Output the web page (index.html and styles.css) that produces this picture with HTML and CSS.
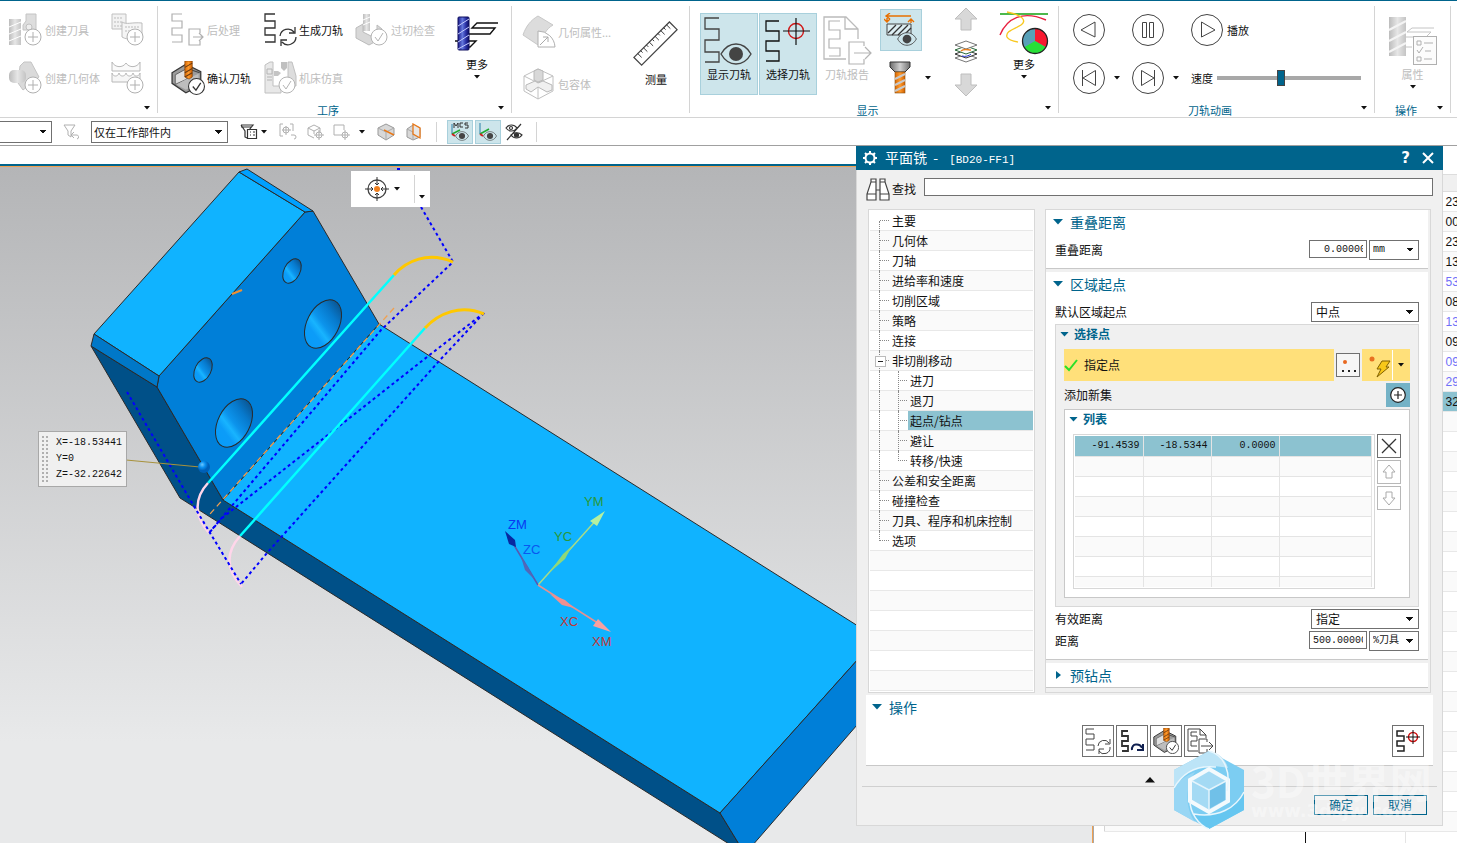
FILE: index.html
```html
<!DOCTYPE html>
<html lang="zh-CN">
<head>
<meta charset="utf-8">
<title>平面铣</title>
<link rel="stylesheet" href="styles.css">
</head>
<body>
<svg class="defs" aria-hidden="true">
  <defs>
    <linearGradient id="gGrey"><stop offset="0" stop-color="#bcbcbc"/><stop offset=".5" stop-color="#e6e6e6"/><stop offset="1" stop-color="#c4c4c4"/></linearGradient>
    <linearGradient id="gBlue"><stop offset="0" stop-color="#1c1c8c"/><stop offset=".4" stop-color="#6478dc"/><stop offset=".7" stop-color="#2c34a8"/><stop offset="1" stop-color="#0c0c60"/></linearGradient>
    <linearGradient id="gOrange"><stop offset="0" stop-color="#d86a08"/><stop offset=".5" stop-color="#ff9a2c"/><stop offset="1" stop-color="#d06000"/></linearGradient>
    <linearGradient id="gSteel"><stop offset="0" stop-color="#6c6c6c"/><stop offset=".5" stop-color="#d0d0d0"/><stop offset="1" stop-color="#707070"/></linearGradient>
    <linearGradient id="gHole" x1=".65" y1="0" x2=".35" y2="1"><stop offset="0" stop-color="#0a5490"/><stop offset=".25" stop-color="#0779cc"/><stop offset=".5" stop-color="#0c94ec"/><stop offset=".62" stop-color="#18b4ff"/><stop offset=".75" stop-color="#0c9cf8"/><stop offset="1" stop-color="#089cf8"/></linearGradient>
    <radialGradient id="gBall" cx=".35" cy=".3"><stop offset="0" stop-color="#6cc8ff"/><stop offset=".5" stop-color="#0a90f0"/><stop offset="1" stop-color="#0060b8"/></radialGradient>
  </defs>
  <symbol id="i-verify" viewBox="0 0 32 32">
    <path d="M1 11L14 3l14 7v13L14 30 1 21z" fill="#9c9c9c" stroke="#383838" stroke-width="1.2"/>
    <path d="M4 13l11-6v10L4 22z" fill="#e0e0e0" stroke="#555" stroke-width=".8"/><path d="M15 17l11-5v9l-12 6-9-5z" fill="#bdbdbd"/><path d="M15 7l12 4" stroke="#444"/>
    <path d="M13 0h7v15l-3 2-4-2z" fill="url(#gOrange)" stroke="#7c3c00" stroke-width=".6"/><path d="M13 6l7-4M13 11l7-4M13 15l7-4" stroke="#6a3a10"/>
    <circle cx="24" cy="24" r="7.500" fill="#fff" stroke="#333" stroke-width="1"/><path d="M20.500 24l3 3.500 4.500-7" fill="none" stroke="#333" stroke-width="1.2"/>
  </symbol>
  <symbol id="i-plus" viewBox="0 0 18 18"><circle cx="9" cy="9" r="8" fill="#fff" stroke="#b0b0b0"/><path d="M9 4v10M4 9h10" stroke="#b0b0b0"/></symbol>
  <symbol id="i-eye" viewBox="0 0 32 22"><path d="M1 11C5 4 10 1 16 1s11 3 15 10c-4 7-9 10-15 10S5 18 1 11z" fill="#cde5eb" stroke="#444" stroke-width="1.4"/><circle cx="16" cy="11" r="7" fill="#444"/></symbol>
  <symbol id="i-caret" viewBox="0 0 6 4"><path d="M0 0h6L3 3.500z" fill="#111"/></symbol>
  <symbol id="i-tri" viewBox="0 0 10 6"><path d="M0 0h10L5 5.500z" fill="#00648c"/></symbol>
</svg>

<header class="ribbon">
  <section class="group g-create">
    <div class="rows">
      <button class="item off" disabled><svg width="34" height="34" viewBox="0 0 34 34"><rect x="0" y="6" width="12" height="26" fill="url(#gGrey)"/><path d="M0 14l12-5M0 21l12-5M0 28l12-5" stroke="#fff"/><path d="M17 1h10v16H14v-5l3-4z" fill="#ddd" stroke="#c4c4c4"/><circle cx="20" cy="14" r="3" fill="#eee" stroke="#c0c0c0"/><use href="#i-plus" x="15" y="15" width="18" height="18"/></svg><span>创建刀具</span></button>
      <button class="item off" disabled aria-label="创建程序"><svg width="34" height="34" viewBox="0 0 34 34"><path d="M1 1h14v15H1z" fill="#f2f2f2" stroke="#c0c0c0"/><path d="M3 5h9M3 9h9M3 13h9" stroke="#bbb" stroke-dasharray="2 1"/><path d="M11 9c5 3 9 0 20 1v15c-8-1-14 3-20-1z" fill="#f5f5f5" stroke="#bdbdbd"/><path d="M14 14h14M14 18h14" stroke="#bbb" stroke-dasharray="2 1"/><use href="#i-plus" x="15" y="15" width="18" height="18"/></svg></button>
      <button class="item off" disabled><svg width="34" height="34" viewBox="0 0 34 34"><path d="M11 5l4-4h7l8 15-7 6-9 7-5-7z" fill="#dadada" stroke="#c4c4c4"/><rect x="0" y="9" width="17" height="13" rx="5" fill="url(#gGrey)"/><use href="#i-plus" x="15" y="15" width="18" height="18"/></svg><span>创建几何体</span></button>
      <button class="item off" disabled aria-label="创建方法"><svg width="34" height="34" viewBox="0 0 34 34"><path d="M1 1v9h28V1c-3 6-11 6-14 1-3 5-11 5-14-1z" fill="#fafafa" stroke="#b8b8b8"/><path d="M1 12v9h28v-9c-1 4-6 4-7 0-1 4-6 4-7 0-1 4-6 4-7 0-1 4-6 4-7 0z" fill="#f6f6f6" stroke="#b8b8b8"/><use href="#i-plus" x="15" y="15" width="18" height="18"/></svg></button>
    </div>
    <div class="foot"><span></span><svg class="caret"><use href="#i-caret"/></svg></div>
  </section>

  <section class="group g-oper">
    <div class="body">
      <div class="rows">
        <button class="item off" disabled><svg width="34" height="34" viewBox="0 0 34 34"><path d="M11 1H1v7h10v7H1v7h10v7H1M29 20v-4H18v16h11v-4M22 24h10m-4-4l4 4-4 4" fill="none" stroke="#b0b0b0" stroke-width="1.200"/></svg><span>后处理</span></button>
        <button class="item"><svg width="34" height="34" viewBox="0 0 34 34"><path d="M12 1H2v7h10v7H2v7h10v7H2" fill="none" stroke="#333" stroke-width="1.300"/><path d="M17 23a8 8 0 0 1 14-4m1-5v6h-6M33 24a8 8 0 0 1-14 5m-1 4v-6h6" fill="none" stroke="#333" stroke-width="1.300"/></svg><span>生成刀轨</span></button>
        <button class="item off" disabled><svg width="34" height="34" viewBox="0 0 34 34"><path d="M1 15l7-4v8l8 4 6-4v-7l5 4v9l-13 7-13-7z" fill="#d8d8d8" stroke="#bbb"/><rect x="8" y="1" width="7" height="17" fill="url(#gGrey)"/><path d="M8 7l7-3M8 12l7-3" stroke="#fff"/><circle cx="24" cy="24" r="8" fill="#fff" stroke="#b4b4b4"/><path d="M20 24l3 4 5-8" fill="none" stroke="#b4b4b4"/></svg><span>过切检查</span></button>
        <button class="item"><svg width="34" height="34"><use href="#i-verify"/></svg><span>确认刀轨</span></button>
        <button class="item off" disabled><svg width="34" height="34" viewBox="0 0 34 34"><path d="M2 4l5-3h3v24h8v7H2z" fill="#e8e8e8" stroke="#c0c0c0"/><path d="M4 8h5v5H4zM4 16h5M4 19h5" stroke="#b4b4b4" fill="none"/><path d="M11 10h4l3 2-3 3h-4z" fill="#c4c4c4"/><path d="M18 1h6v6l-3 3-3-3z" fill="#c0c0c0"/><path d="M25 1h4l4 14v10h-8z" fill="#ddd" stroke="#c0c0c0"/><circle cx="24" cy="24" r="8" fill="#fff" stroke="#b4b4b4"/><path d="M20 24l3 4 5-8" fill="none" stroke="#b4b4b4"/></svg><span>机床仿真</span></button>
      </div>
      <button class="more"><svg width="46" height="42" viewBox="0 0 46 42"><path d="M44 11H23l-5 5h23l-5 6H14M1 29h21l-6 6h-6M1 29" fill="none" stroke="#111" stroke-width="1.400"/><rect x="4" y="5" width="11" height="33" rx="1" fill="url(#gBlue)" stroke="#101060"/><path d="M4 14l11-7M4 22l11-7M4 30l11-7M4 37l11-6" stroke="#c4ccff"/></svg><span>更多</span><svg class="caret"><use href="#i-caret"/></svg></button>
    </div>
    <div class="foot"><span>工序</span><svg class="caret"><use href="#i-caret"/></svg></div>
  </section>

  <section class="group g-measure">
    <div class="body">
      <div class="rows tall">
        <button class="item off" disabled><svg width="34" height="34" viewBox="0 0 34 34"><path d="M1 20C4 11 9 5 16 1l15 9c-7 4-11 11-12 22z" fill="#dcdcdc" stroke="#c8c8c8"/><path d="M16 16v16h17A17 17 0 0 0 16 16z" fill="#fff" stroke="#b0b0b0"/><path d="M18 30l8-8m-5 0h5v5" fill="none" stroke="#aaa"/></svg><span>几何属性...</span></button>
        <button class="item off" disabled><svg width="34" height="34" viewBox="0 0 34 34"><path d="M2 9l14-7 15 7v15L16 32 2 24zM2 9l14 7 15-7M16 16v16" fill="none" stroke="#c0c0c0"/><path d="M12 4l4-2 5 2v9l-5 2-4-2z" fill="#d8d8d8" stroke="#b8b8b8"/><path d="M4 18l9-4 3 2 5-2 9 4v5l-5 2-9-5-7 5-5-3z" fill="#f0f0f0" stroke="#b8b8b8"/></svg><span>包容体</span></button>
      </div>
      <button class="more ruler"><svg width="48" height="48" viewBox="0 0 48 48"><path d="M1 38L38 1l8 8L9 46z" fill="#fff" stroke="#444" stroke-width="1.300"/><path d="M5 34l4 4M8 31l2 2M11 28l4 4M14 25l2 2M17 22l4 4M20 19l2 2M23 16l4 4M26 13l2 2M29 10l4 4M32 7l2 2M35 4l4 4" stroke="#333"/></svg><span>测量</span></button>
    </div>
    <div class="foot"></div>
  </section>

  <section class="group g-show">
    <div class="body">
      <button class="big on"><svg width="50" height="50" viewBox="0 0 50 50"><path d="M15 2H1v11h14v11H1v12h14v10H1" fill="none" stroke="#444" stroke-width="1.300"/><use href="#i-eye" x="16" y="27" width="32" height="22"/></svg><span>显示刀轨</span></button>
      <button class="big on"><svg width="50" height="50" viewBox="0 0 50 50"><path d="M16 5H3v10h13v10H3v10h13v10H3" fill="none" stroke="#111" stroke-width="1.300"/><circle cx="33" cy="15" r="7.500" fill="none" stroke="#d01818" stroke-width="1.400"/><path d="M33 2v27M20 15h27" stroke="#111" stroke-width="1.200"/></svg><span>选择刀轨</span></button>
      <button class="big off" disabled><svg width="50" height="50" viewBox="0 0 50 50"><path d="M24 43H2V1h22l12 12v10M23 1v12h13" fill="none" stroke="#bbb" stroke-width="1.300"/><path d="M18 5H7v9h11v9H7v9h11v8H7M42 30v-4H27v22h15v-5M32 37h17m-6-6l6 6-6 6" fill="none" stroke="#b4b4b4" stroke-width="1.200"/></svg><span>刀轨报告</span></button>
      <div class="stack">
        <button class="toggle on" aria-label="显示切削"><svg width="34" height="34" viewBox="0 0 34 34"><path d="M3 3h24M3 3v6M0 6l3 3 3-3M6 0L2 3l4 3M24 9l3-3 3 3M27 6v4" fill="none" stroke="#e87000" stroke-width="1.400"/><path d="M3 11h24v11H3z" fill="#ddeef2" stroke="#444"/><path d="M4 20l8-8M8 22l10-10M14 22l10-10M20 22l7-7" stroke="#333" stroke-width="1.300"/><use href="#i-eye" x="13" y="19" width="20" height="14"/></svg></button>
        <div class="drill"><button class="bare" aria-label="刀具显示"><svg width="22" height="34" viewBox="0 0 22 34"><path d="M1 1h20v5l-5 5H6L1 6z" fill="url(#gSteel)" stroke="#333"/><rect x="6" y="11" width="10" height="21" fill="url(#gOrange)" stroke="#8a5010" stroke-width=".6"/><path d="M6 18l10-5M6 24l10-5M6 30l10-5" stroke="#c8c8c8" stroke-width="2"/></svg></button><svg class="caret"><use href="#i-caret"/></svg></div>
      </div>
      <div class="layers">
        <svg width="24" height="26" viewBox="0 0 24 26"><path d="M12 2l11 11h-6v11H7V13H1z" fill="#d8d8d8" stroke="#bebebe"/></svg>
        <svg width="24" height="26" viewBox="0 0 24 26"><g fill="#fff" stroke="#333"><path d="M12 15l11 4-11 4-11-4z" stroke="#777"/><path d="M12 11l11 4-11 4-11-4z"/><path d="M12 7l11 4-11 4-11-4z" stroke="#2a6a3a"/><path d="M12 2l11 4-11 4L1 6z" stroke="#777"/></g><path d="M7 12c3-3 7-1 10-1" fill="none" stroke="#e88020" stroke-width="1.500"/><path d="M8 17c3 1 7 0 9-2" fill="none" stroke="#2030d0"/></svg>
        <svg width="24" height="26" viewBox="0 0 24 26"><path d="M12 24l11-11h-6V2H7v11H1z" fill="#d8d8d8" stroke="#bebebe"/></svg>
      </div>
      <button class="more"><svg width="50" height="46" viewBox="0 0 50 46"><path d="M1 4h48" stroke="#10a010" stroke-width="1.400"/><path d="M1 25C8 8 24 0 47 10" fill="none" stroke="#e82040" stroke-width="1.400"/><path d="M8 2c16 3 20 9 14 13-6 4-16 6-14 12 1 2 5 4 11 5" fill="none" stroke="#f8c820" stroke-width="1.400"/><circle cx="36" cy="31" r="12.500" fill="#58a0b8"/><path d="M36 31V18.500a12.500 12.500 0 0 1 10.800 18.800z" fill="#f81830"/><path d="M36 31l10.800 6.300a12.500 12.500 0 0 1-21.600 0z" fill="#28e038"/><circle cx="36" cy="31" r="12.500" fill="none" stroke="#222" stroke-width="1.300"/></svg><span>更多</span><svg class="caret"><use href="#i-caret"/></svg></button>
    </div>
    <div class="foot"><span>显示</span><svg class="caret"><use href="#i-caret"/></svg></div>
  </section>

  <section class="group g-play">
    <div class="rows">
      <button class="item" aria-label="倒放"><svg width="32" height="32" viewBox="0 0 32 32" class="ring"><circle cx="16" cy="16" r="15.500"/><path d="M22 8v15L8 16z"/></svg></button>
      <button class="item" aria-label="暂停"><svg width="32" height="32" viewBox="0 0 32 32" class="ring"><circle cx="16" cy="16" r="15.500"/><path d="M10.500 8.500h4v15h-4zM17.500 8.500h4v15h-4z"/></svg></button>
      <button class="item"><svg width="32" height="32" viewBox="0 0 32 32" class="ring"><circle cx="16" cy="16" r="15.500"/><path d="M10.500 8v15L24 16z"/></svg><span>播放</span></button>
      <div class="item"><button class="bare" aria-label="上一步"><svg width="32" height="32" viewBox="0 0 32 32" class="ring"><circle cx="16" cy="16" r="15.500"/><path d="M9.500 8v16M22.500 8.500v15L10 16z"/></svg></button><svg class="caret"><use href="#i-caret"/></svg></div>
      <div class="item"><button class="bare" aria-label="下一步"><svg width="32" height="32" viewBox="0 0 32 32" class="ring"><circle cx="16" cy="16" r="15.500"/><path d="M22.500 8v16M9.500 8.500v15L22 16z"/></svg></button><svg class="caret"><use href="#i-caret"/></svg></div>
      <div class="item speed"><label for="speed">速度</label><input id="speed" type="range" min="0" max="100" value="44"></div>
    </div>
    <div class="foot"><span>刀轨动画</span><svg class="caret"><use href="#i-caret"/></svg></div>
  </section>

  <section class="group g-prop">
    <div class="body">
      <button class="more prop off" disabled><svg width="50" height="50" viewBox="0 0 50 50"><rect x="1" y="1" width="17" height="39" fill="url(#gGrey)"/><path d="M1 14l17-9M1 25l17-9M1 36l17-9" stroke="#f4f4f4" stroke-width="2"/><path d="M46 12H24l-5 4h24l-5 5H18M18 31h6" fill="none" stroke="#c4c4c4"/><rect x="25.500" y="20.500" width="23" height="28" fill="#fcfcfc" stroke="#b0b0b0"/><path d="M29 25h4v4h-4zM36 27h9M29 34l2 3 4-6M37 35h6M29 41h4v4h-4zM36 43h8" fill="none" stroke="#b0b0b0"/></svg><span>属性</span><svg class="caret"><use href="#i-caret"/></svg></button>
    </div>
    <div class="foot"><span>操作</span><svg class="caret"><use href="#i-caret"/></svg></div>
  </section>
</header>

<nav class="filters">
  <select class="box left" aria-label="类型过滤器"><option></option></select>
  <svg class="ic faint" viewBox="0 0 18 18"><path d="M2 2h11L9 8v6l-3-2V8zM10 12h4a2 2 0 0 1 1 4M12 9l-3 3 3 3"/></svg>
  <select class="box scope" aria-label="选择范围"><option>仅在工作部件内</option></select>
  <svg class="ic dark" viewBox="0 0 18 18"><path d="M1 2h12L9 7M1 2l4 6v6l2 1M1 4h10"/><path d="M7.500 6.500h9v9h-9zM10 9h1M13 9h2M10 12h1M13 12h2"/></svg>
  <svg class="caret"><use href="#i-caret"/></svg>
  <svg class="ic faint gap-a" viewBox="0 0 18 18"><path d="M4 1H1v12h3M11 1h3v7M7 3v9M3 7h9M12 12h3a1 1 0 0 1 0 4"/><circle cx="7" cy="7" r="3"/></svg>
  <svg class="ic faint gap-b" viewBox="0 0 18 18"><path d="M1 5l6-3 6 3v4M1 5v7l6 3M1 5l6 3 6-3M7 8v3"/><circle cx="12" cy="12" r="3"/><path d="M12 7v10M7 12h10"/></svg>
  <svg class="ic faint gap-c" viewBox="0 0 18 18"><path d="M1 2h10v5M1 2v10h6"/><circle cx="12" cy="12" r="3"/><path d="M12 7v10M7 12h10"/></svg>
  <svg class="caret gap-c"><use href="#i-caret"/></svg>
  <svg class="ic gap-d" viewBox="0 0 18 18"><path d="M1 5l8-4 8 4v7l-8 5-8-5z" fill="#d8d8d8" stroke="#999"/><path d="M1 5l8 4 8-4M9 9v8" fill="none" stroke="#aaa"/><path d="M7 7l10 5" stroke="#e87818" stroke-width="1.500"/></svg>
  <svg class="ic gap-b" viewBox="0 0 18 18"><path d="M2 6l6-4 7 3v9l-7 3-6-3z" fill="#d8d8d8" stroke="#999"/><path d="M2 6l6 3v8" fill="none" stroke="#aaa"/><path d="M8 1v10l7 4V5z" fill="#e8e8e8" stroke="#e87818" stroke-width="1.300"/></svg>
  <i class="sep"></i>
  <button class="tgl" aria-label="显示 MCS"><svg width="20" height="20" viewBox="0 0 20 20"><path d="M2 2v10" stroke="#2a80a8"/><path d="M2 12l8-4" stroke="#20a830" stroke-width="1.500"/><path d="M2 12l3 2" stroke="#d02020" stroke-width="2"/><path d="M4 6V1l2 3 2-3v5M13 1h-3v4h3M18 1h-3v2h3v3h-3" fill="none" stroke="#333"/><use href="#i-eye" x="5" y="9" width="14" height="10"/></svg></button>
  <button class="tgl" aria-label="显示 WCS"><svg width="20" height="20" viewBox="0 0 20 20"><path d="M2 1v11" stroke="#2a80a8"/><path d="M2 12l9-5" stroke="#20a830" stroke-width="1.500"/><path d="M2 12l3 2" stroke="#d02020" stroke-width="2"/><use href="#i-eye" x="5" y="9" width="14" height="10"/></svg></button>
  <svg class="ic dark" viewBox="0 0 18 18"><path d="M16 1L2 17M1 5c3-4 8-4 11 0-3 4-8 4-11 0zM6 12c3-3 8-3 11 0-3 4-8 4-11 0z"/><circle cx="11.500" cy="12" r="2" fill="#333"/><circle cx="6" cy="5" r="1.500"/></svg>
  <i class="sep end"></i>
</nav>

<main class="work">
  <div class="stage">
    <div class="tabstrip"></div>
    <div class="view">
      <svg class="scene" viewBox="0 167 1092 676" preserveAspectRatio="xMinYMin slice">
        <g stroke="#2a2a2a" stroke-width="1" stroke-linejoin="round">
          <path d="M91 346l66 41 66 113 497 313 25 41L180 498z" fill="#005088"/>
          <path d="M379 324L877 638 720 813 223 500z" fill="#10b3ff"/>
          <path d="M720 813l157-175v64L745 854z" fill="#007fd8"/>
          <path d="M159 376L305 212l8-1 66 113-156 176-66-113z" fill="#007fd8"/>
          <path d="M239 172l66 40-146 164-65-42z" fill="#10b3ff"/>
          <path d="M239 172l8-3 66 42-8 1z" fill="#00a0ff"/>
          <path d="M94 334l65 42-2 11-66-41z" fill="#0078c8"/>
          <g fill="url(#gHole)">
            <ellipse cx="292" cy="271" rx="8" ry="13" transform="rotate(27 292 271)"/>
            <ellipse cx="323" cy="324" rx="16" ry="26" transform="rotate(27 323 324)"/>
            <ellipse cx="203" cy="370" rx="8" ry="13" transform="rotate(27 203 370)"/>
            <ellipse cx="234" cy="423" rx="16" ry="26" transform="rotate(27 234 423)"/>
          </g>
        </g>
        <g fill="none">
          <path d="M394 308L210 514" stroke="#f0a050" stroke-width="1.300" stroke-dasharray="6 4"/>
          <path d="M232 294l10-4" stroke="#f09030" stroke-width="2"/>
          <g stroke="#00f" stroke-width="2" stroke-dasharray="3 3">
            <path d="M397 169h4M421 207l32 55L381 330 230 508 209 533"/>
            <path d="M484 313L427 357 347 420 222 518 209 533"/>
            <path d="M484 313L440 360 267 553l-26 31"/>
          </g>
          <path d="M394 275L208 483M425 328L240 536" stroke="#0ff" stroke-width="2.500"/>
          <path d="M394 275c12-14 34-24 59-13M425 328c14-15 36-24 59-14" stroke="#ffc800" stroke-width="3"/>
          <path d="M208 483c-14 15-14 33 1 50M240 536c-14 16-15 33 2 51" stroke="#ffd6ea" stroke-width="2.500"/>
          <path d="M127 392L195 508 241 584" stroke="#00f" stroke-width="2" stroke-dasharray="3 3"/>
          <path d="M126 460l74 7" stroke="#a8923c"/>
        </g>
        <circle cx="204" cy="467" r="6" fill="url(#gBall)"/>
        <g stroke-width="1.500">
          <path d="M538 585l60-67" stroke="#a8dc88"/><path d="M605 511l-8 15-7-5z" fill="#b4f0a0"/><path d="M572 546l-7 13-16 14 14-19z" fill="#90d878"/>
          <path d="M538 585l-24-40" stroke="#5858b0"/><path d="M505 531l10 9 1 7-7-3z" fill="#0828a0"/><path d="M521 557l7 10 7 13-10-10z" fill="#5068b8"/>
          <path d="M538 585l66 42" stroke="#e89090"/><path d="M611 632l-18-6 5-7z" fill="#f8a0a0"/><path d="M574 608l-12-3-12-11 15 6z" fill="#f09090"/>
        </g>
        <g class="axis">
          <text x="584" y="506" fill="#2a9838">YM</text><text x="554" y="541" fill="#2a9838">YC</text>
          <text x="508" y="529" fill="#0a38f0">ZM</text><text x="523" y="554" fill="#0a58f0">ZC</text>
          <text x="560" y="626" fill="#c03838">XC</text><text x="592" y="646" fill="#c03838">XM</text>
        </g>
      </svg>
      <div class="snap"><svg width="24" height="24" viewBox="0 0 24 24"><circle cx="12" cy="12" r="9" fill="none" stroke="#444" stroke-width="1.300"/><path d="M12 0v8M12 16v8M0 12h8M16 12h8M10 6l2 2 2-2M10 18l2-2 2 2M6 10l2 2-2 2M18 10l-2 2 2 2" fill="none" stroke="#333"/><circle cx="12" cy="12" r="3" fill="#f08020"/></svg><svg class="caret"><use href="#i-caret"/></svg><span class="snap-end"><svg class="caret"><use href="#i-caret"/></svg></span></div>
      <output class="coords"><i class="grip"></i><span>X=-18.53441<br>Y=0<br>Z=-32.22642</span></output>
    </div>
  </div>
  <aside class="navi">
    <table>
      <thead><tr><th></th><th></th><th></th></tr></thead>
      <tbody>
        <tr><td></td><td></td><td>23</td></tr><tr><td></td><td></td><td>00</td></tr><tr><td></td><td></td><td>23</td></tr><tr><td></td><td></td><td>13</td></tr>
        <tr class="alt"><td></td><td></td><td>53</td></tr><tr><td></td><td></td><td>08</td></tr><tr class="alt"><td></td><td></td><td>13</td></tr><tr><td></td><td></td><td>09</td></tr>
        <tr class="alt"><td></td><td></td><td>09</td></tr><tr class="alt"><td></td><td></td><td>29</td></tr><tr class="cur"><td></td><td></td><td>32</td></tr>
        <tr><td></td><td></td><td></td></tr><tr><td></td><td></td><td></td></tr><tr><td></td><td></td><td></td></tr><tr><td></td><td></td><td></td></tr><tr><td></td><td></td><td></td></tr><tr><td></td><td></td><td></td></tr><tr><td></td><td></td><td></td></tr><tr><td></td><td></td><td></td></tr><tr><td></td><td></td><td></td></tr><tr><td></td><td></td><td></td></tr><tr><td></td><td></td><td></td></tr><tr><td></td><td></td><td></td></tr><tr><td></td><td></td><td></td></tr><tr><td></td><td></td><td></td></tr><tr><td></td><td></td><td></td></tr><tr><td></td><td></td><td></td></tr><tr><td></td><td></td><td></td></tr><tr><td></td><td></td><td></td></tr><tr><td></td><td></td><td></td></tr><tr><td></td><td></td><td></td></tr><tr><td></td><td></td><td></td></tr>
      </tbody>
    </table>
    <div class="split"><i></i><i></i></div>
  </aside>

  <section class="dialog" role="dialog" aria-labelledby="dlg-title">
    <div class="title">
      <svg width="14" height="14" viewBox="0 0 14 14"><circle cx="7" cy="7" r="4.500" fill="none" stroke="#fff" stroke-width="2"/><path d="M7 0v2M7 12v2M0 7h2M12 7h2M2 2l1.500 1.500M10.500 10.500L12 12M12 2l-1.500 1.500M2 12l1.500-1.500" stroke="#fff" stroke-width="2"/></svg>
      <h1 id="dlg-title">平面铣 <span class="dash">-</span> <span class="mono">[BD20-FF1]</span></h1>
      <button aria-label="帮助" class="help">?</button>
      <button aria-label="关闭"><svg width="12" height="12" viewBox="0 0 12 12"><path d="M1 1l10 10M11 1L1 11" stroke="#fff" stroke-width="2"/></svg></button>
    </div>
    <div class="find">
      <svg width="24" height="23" viewBox="0 0 24 23"><path d="M5 4V1h5v21H1v-6L5 4zM19 4V1h-5v21h9v-6L19 4zM10 12h4M1 16h9M14 16h9M5 4h5M14 4h5" fill="#fff" stroke="#444" stroke-width="1.200"/></svg>
      <label for="find">查找</label><input id="find" type="text">
    </div>
    <div class="cols">
      <ul class="tree">
        <li><a href="#">主要</a></li><li><a href="#">几何体</a></li><li><a href="#">刀轴</a></li><li><a href="#">进给率和速度</a></li><li><a href="#">切削区域</a></li><li><a href="#">策略</a></li><li><a href="#">连接</a></li>
        <li class="open"><a href="#">非切削移动</a></li>
        <li class="sub"><a href="#">进刀</a></li><li class="sub"><a href="#">退刀</a></li><li class="sub sel"><a href="#">起点/钻点</a></li><li class="sub"><a href="#">避让</a></li><li class="sub last"><a href="#">转移/快速</a></li>
        <li><a href="#">公差和安全距离</a></li><li><a href="#">碰撞检查</a></li><li><a href="#">刀具、程序和机床控制</a></li><li class="last"><a href="#">选项</a></li>
        <li class="void"></li><li class="void"></li><li class="void"></li><li class="void"></li><li class="void"></li><li class="void"></li><li class="void"></li>
      </ul>
      <div class="pane">
        <section class="card overlap">
          <h2><svg width="10" height="6"><use href="#i-tri"/></svg>重叠距离</h2>
          <div class="field"><label for="ov">重叠距离</label><input id="ov" class="num" value=" 0.00000"><select class="box unit" aria-label="单位"><option>mm</option></select></div>
        </section>
        <section class="card region">
          <h2><svg width="10" height="6"><use href="#i-tri"/></svg>区域起点</h2>
          <div class="field"><label for="def">默认区域起点</label><select id="def" class="box wide"><option>中点</option></select></div>
          <div class="pick">
            <h3><svg width="9" height="5" viewBox="0 0 10 6"><use href="#i-tri"/></svg>选择点</h3>
            <div class="point">
              <div class="spec"><svg width="14" height="14" viewBox="0 0 14 14"><path d="M1 8l4 4 8-10" fill="none" stroke="#28e028" stroke-width="2"/></svg>指定点</div>
              <button class="sq" aria-label="点对话框"><svg width="18" height="18" viewBox="0 0 18 18"><circle cx="6" cy="6" r="2" fill="#e86820"/><path d="M3 15h2M9 15h2M15 15h2" stroke="#222" stroke-width="2"/></svg></button>
              <div class="infer"><button class="bare" aria-label="自动判断的点"><svg width="30" height="28" viewBox="0 0 30 28"><circle cx="10" cy="8" r="2.500" fill="#e87020"/><path d="M20 10h8l-4 6h3L15 26l4-8h-4z" fill="#f8c818" stroke="#806000"/></svg></button><span><svg class="caret"><use href="#i-caret"/></svg></span></div>
            </div>
            <div class="add"><span>添加新集</span><button aria-label="添加新集"><svg width="16" height="16" viewBox="0 0 16 16"><circle cx="8" cy="8" r="7.300" fill="#fff" stroke="#222" stroke-width="1.200"/><path d="M8 4v8M4 8h8" stroke="#222" stroke-width="1.200"/></svg></button></div>
            <div class="list">
              <h3><svg width="9" height="5" viewBox="0 0 10 6"><use href="#i-tri"/></svg>列表</h3>
              <div class="listrow">
                <div class="grid"><table>
                  <tr class="sel"><td>-91.4539</td><td>-18.5344</td><td>0.0000</td><td></td></tr>
                  <tr><td></td><td></td><td></td><td></td></tr><tr><td></td><td></td><td></td><td></td></tr><tr><td></td><td></td><td></td><td></td></tr><tr><td></td><td></td><td></td><td></td></tr><tr><td></td><td></td><td></td><td></td></tr><tr><td></td><td></td><td></td><td></td></tr><tr class="half"><td></td><td></td><td></td><td></td></tr>
                </table></div>
                <div class="tools">
                  <button class="sq" aria-label="移除"><svg width="16" height="16" viewBox="0 0 16 16"><path d="M1 1l14 14M15 1L1 15" stroke="#333" stroke-width="1.300"/></svg></button>
                  <button class="sq dim" disabled aria-label="上移"><svg width="16" height="16" viewBox="0 0 16 16"><path d="M8 1l6 7h-3v6H5V8H2z" fill="#fff" stroke="#aaa"/></svg></button>
                  <button class="sq dim" disabled aria-label="下移"><svg width="16" height="16" viewBox="0 0 16 16"><path d="M8 15L2 8h3V2h6v6h3z" fill="#fff" stroke="#aaa"/></svg></button>
                </div>
              </div>
            </div>
          </div>
          <div class="field"><label for="eff">有效距离</label><select id="eff" class="box wide"><option>指定</option></select></div>
          <div class="field"><label for="dist">距离</label><input id="dist" class="num" value="500.00000"><select class="box unit" aria-label="距离单位"><option>%刀具</option></select></div>
        </section>
        <section class="card"><h2><svg width="10" height="10" viewBox="0 0 10 10"><path d="M3 1v8l5-4z" fill="#00648c"/></svg>预钻点</h2></section>
      </div>
    </div>
    <section class="actions">
      <h2><svg width="10" height="6"><use href="#i-tri"/></svg>操作</h2>
      <div class="btns">
        <button class="act" aria-label="生成"><svg width="28" height="28" viewBox="0 0 28 28"><path d="M10 2H2v5h8v5H2v6h8v5H2" fill="none" stroke="#444"/><path d="M14 19a6 6 0 0 1 11-3m1-4v5h-5M26 20a6 6 0 0 1-11 4m0 3v-5h5" fill="none" stroke="#444"/></svg></button>
        <button class="act" aria-label="重播"><svg width="28" height="28" viewBox="0 0 28 28"><path d="M10 4H4v5h6v5H4v5h6v5H4" fill="none" stroke="#333" stroke-width="1.800"/><path d="M14 23c-1-7 8-7 10-2m1-4v6h-6" fill="none" stroke="#102050" stroke-width="2"/></svg></button>
        <button class="act" aria-label="确认"><svg width="26" height="26"><use href="#i-verify"/></svg></button>
        <button class="act" aria-label="列表"><svg width="28" height="28" viewBox="0 0 28 28"><path d="M12 24H2V2h12l6 6v3M14 2v6h6M11 5H5v4h6v5H5v5h6M21 15v-3h-8v14h8v-4M15 19h12m-4-4l4 4-4 4" fill="none" stroke="#444"/></svg></button>
        <button class="act end" aria-label="选择刀轨"><svg width="28" height="28" viewBox="0 0 28 28"><path d="M10 4H3v5h7v5H3v5h7v5H3" fill="none" stroke="#222" stroke-width="1.500"/><circle cx="19" cy="10" r="4.500" fill="none" stroke="#d01010" stroke-width="1.500"/><path d="M19 3v14M12 10h14" stroke="#111"/></svg></button>
      </div>
    </section>
    <div class="fold"><svg width="10" height="6" viewBox="0 0 10 6"><path d="M0 5.500h10L5 0z" fill="#111"/></svg></div>
    <div class="confirm"><button>确定</button><button>取消</button></div>
    <div class="mark">
      <svg width="72" height="80" viewBox="0 0 72 80"><path d="M36 1l35 19v40L36 79 1 60V20z" fill="#7ccdf2"/><path d="M36 1L1 20v18C12 18 32 13 55 18 52 8 44 2 36 1z" fill="#bce4f7"/><path d="M1 20v40l21 12C12 58 12 36 22 22 12 26 5 31 1 38z" fill="#98d6f4"/><path d="M71 42c-8 16-26 26-50 22 4 8 9 13 15 15l35-19z" fill="#66c6f0"/><path d="M36 19l19 11v21L36 62 17 51V30z" fill="#a4daf4" stroke="#f4fafd" stroke-width="4"/><path d="M36 40l16-9v19l-16 9z" fill="#70c0e8"/><path d="M36 60V40L19 31M36 40l17-9" fill="none" stroke="#e4f4fc" stroke-width="1.500"/><path d="M1 38C10 22 24 15 43 17M17 51c0 11 8 24 19 28M71 42c-8 16-26 26-50 22M36 1c16 4 22 22 18 40" fill="none" stroke="#e8f6fd" stroke-width="1.500"/></svg>
      <div><b>3D世界网</b><span>www.3dsjw.com</span></div>
    </div>
  </section>
</main>
</body>
</html>
```
FILE: styles.css
```css
* { box-sizing: border-box; }
body {
  margin: 0;
  min-height: 100vh;
  display: flex;
  flex-direction: column;
  background: #fff;
  color: #111;
  font: 12px/16px "Noto Sans CJK SC", sans-serif;
  overflow: hidden;
}
button, input, select { font: inherit; color: inherit; margin: 0; }
button { padding: 0; border: 0; background: none; }
h1, h2, h3, ul { margin: 0; padding: 0; }
svg { display: block; flex: none; }
.defs { position: absolute; width: 0; height: 0; }
.caret { width: 6px; height: 4px; }
.mono { font-family: "Liberation Mono", monospace; }

/* ribbon */
.ribbon {
  display: flex;
  flex: none;
  padding: 5px 0 4px;
  border-top: 1px solid #00648c;
  border-bottom: 1px solid #d4d4d4;
  font-size: 11px;
}
.group {
  display: flex;
  flex-direction: column;
  flex: none;
  height: 107px;
  border-right: 1px solid #d4d4d4;
}
.g-create { width: 158px; }
.g-oper { width: 354px; }
.g-measure { width: 178px; }
.g-show { width: 369px; }
.g-play { width: 316px; }
.g-prop { width: 76px; }
.body { display: flex; height: 96px; }
.rows { display: grid; grid-auto-rows: 48px; }
.g-create .rows { grid-template-columns: 102px 40px; padding-left: 9px; }
.g-oper .rows { grid-template-columns: 92px 92px 92px; padding-left: 13px; }
.g-measure .rows { grid-auto-rows: 52px; grid-template-columns: 104px; padding-left: 10px; }
.g-play .rows { grid-template-columns: 59px 59px 1fr; padding: 0 13px 0 14px; }
.item { display: flex; align-items: center; gap: 2px; white-space: nowrap; text-align: left; }
.g-play .item { gap: 4px; }
.g-play .item > .caret { margin-left: 5px; }
.off { color: #bdbdbd; }
.foot { display: flex; height: 11px; line-height: 16px; color: #00648c; }
.foot span { flex: 1; text-align: center; }
.foot .caret { margin: 4px 7px 0 0; }
.more { display: flex; flex-direction: column; align-items: center; width: 60px; height: 84px; padding-top: 4px; }
.more svg:first-child { height: 46px; }
.more .caret { margin-top: 3px; }
.ruler { padding-top: 15px; }
.ruler span { margin-top: 4px; }
.prop { width: 76px; padding-top: 10px; }
.prop svg:first-child { height: 50px; }
.g-show .body { padding-left: 10px; gap: 1px; }
.big { display: flex; flex-direction: column; align-items: center; width: 58px; height: 82px; margin-top: 7px; border: 1px solid transparent; overflow: hidden; }
.big svg { margin: 2px 0 0; }
.on { background: #cde5eb; border: 1px solid #a8d0dc; }
.stack { width: 58px; margin: 3px 0 0 3px; }
.toggle { display: flex; justify-content: center; align-items: center; width: 42px; height: 42px; }
.drill { display: flex; align-items: center; gap: 14px; padding: 10px 0 0 9px; }
.layers { display: flex; flex-direction: column; gap: 7px; width: 54px; align-items: center; }
.ring circle, .ring path { fill: #fff; stroke: #444; stroke-width: 1; }
input[type="range"] { appearance: none; flex: 1; min-width: 0; height: 16px; background: linear-gradient(#a8a8a8, #a8a8a8) center / 100% 4px no-repeat; }
input[type="range"]::-webkit-slider-thumb { appearance: none; width: 8px; height: 16px; background: #00648c; border: 1px solid #444; }

/* selection bar */
.filters { display: flex; align-items: center; flex: none; height: 28px; border-bottom: 1px solid #a0a0a0; }
.box {
  appearance: none;
  height: 20px;
  padding: 0 16px 0 4px;
  border: 1px solid #707070;
  border-radius: 0;
  background-color: #fff;
  background-image: linear-gradient(to bottom left, #111 50%, transparent 50%), linear-gradient(to bottom right, #111 50%, transparent 50%);
  background-repeat: no-repeat;
  background-size: 4px 4px;
  background-position: right 8px center, right 4px center;
  line-height: 16px;
}
.filters .box { height: 22px; font-size: 11px; padding-left: 2px; }
.left { width: 52px; border-left: 0; }
.scope { width: 137px; margin-left: 11px; }
.ic { width: 18px; height: 18px; fill: none; }
.faint { stroke: #b0b0b0; }
.dark { stroke: #333; stroke-width: 1.2; }
.left + .ic { margin-left: 10px; }
.scope + .ic { margin-left: 12px; }
.filters > .caret { margin-left: 3px; }
.filters .gap-a { margin-left: 12px; }
.filters .gap-b { margin-left: 10px; }
.filters .gap-c { margin-left: 8px; }
.filters .gap-d { margin-left: 12px; }
.sep { width: 1px; height: 20px; background: #d4d4d4; margin: 0 10px 0 13px; }
.tgl { display: flex; align-items: center; justify-content: center; width: 26px; height: 24px; margin-right: 2px; background: #cde5eb; border: 1px solid #a8d0dc; }
.tgl + .ic { margin-left: 2px; }

/* work area */
.work { position: relative; display: flex; flex: 1; min-height: 697px; }
.stage { flex: 1; display: flex; flex-direction: column; min-width: 0; }
.tabstrip { height: 20px; border-bottom: 2px solid #00648c; }
.view { position: relative; flex: 1; overflow: hidden; border-top: 1px solid #f0a050; border-right: 1px solid #f0a050; background: linear-gradient(#b4b5b7, #e8e9ea 85%); }
.scene { position: absolute; inset: 0; width: 100%; height: 100%; }
.axis { font: 13px "Liberation Sans", sans-serif; }
.snap { position: absolute; left: 351px; top: 4px; display: flex; align-items: center; gap: 5px; width: 79px; height: 36px; padding-left: 14px; background: #fff; }
.snap-end { display: flex; align-items: flex-end; height: 28px; margin-left: 9px; padding: 0 0 4px 4px; border-left: 1px solid #d4d4d4; }
.coords { position: absolute; left: 38px; top: 264px; display: flex; gap: 7px; padding: 3px 4px 3px 2px; border: 1px solid #a8a8a8; background: #f0f0f0; font: 10px/16px "Liberation Mono", monospace; }
.grip { width: 8px; background: radial-gradient(circle, #b0b0b0 1px, transparent 1px) 0 0 / 4px 4px; }
.navi { width: 364px; padding: 28px 0 0 10px; border-left: 1px solid #a8a8a8; display: flex; flex-direction: column; justify-content: space-between; height: 697px; overflow: hidden; }
.navi table { width: 100%; border-collapse: collapse; table-layout: fixed; font: 12px/16px "Liberation Sans", sans-serif; border-left: 1px solid #d4d4d4; }
.navi th { height: 17px; background: #f0f0f0; border-top: 1px solid #ddd; border-bottom: 1px solid #ddd; }
.navi th:nth-child(1) { width: 200px; }
.navi th:nth-child(2) { width: 140px; }
.navi td { height: 20px; padding: 0 0 0 1px; border-bottom: 1px solid #e8e8e8; white-space: nowrap; }
.navi tbody tr:nth-child(even) { background: #fafafa; }
.navi .alt { color: #7070f8; }
.navi tbody .cur { background: #8cc2d0; }
.split { display: grid; grid-template-columns: 202px 100px; flex: none; height: 17px; }
.split i { border-right: 1px solid #e4e4e4; }
.split i:first-child { border-color: #111; }

/* dialog */
.dialog { position: absolute; right: 14px; top: 0; width: 587px; border: 1px solid #d8d8d8; border-top: 0; background: #f0f0f0; }
.title { display: flex; align-items: center; height: 24px; padding: 0 9px 0 7px; background: #00648c; color: #fff; margin: 0 -1px; }
.title h1 { flex: 1; font-size: 14px; font-weight: 400; line-height: 20px; margin-left: 8px; }
.title .mono { font-size: 11px; margin-left: 6px; }
.title .dash { margin: 0 2px 0 3px; }
.title .help { font: bold 15px/20px "DejaVu Sans", sans-serif; margin-right: 12px; }
.find { display: flex; align-items: flex-start; height: 39px; padding: 8px 9px 0; }
.find label { margin: 3px 8px 0 2px; }
.find input { flex: 1; min-width: 0; height: 18px; border: 1px solid #707070; background: #fff; }
.cols { display: flex; gap: 10px; margin: 0 11px; }
.tree { width: 167px; flex: none; padding: 1px; border: 1px solid #d8d8d8; background: #fff; list-style: none; }
.tree li { position: relative; height: 20px; padding-left: 22px; border-bottom: 1px solid #e8e8e8; line-height: 19px; }
.tree li:nth-child(even) { background: #fafafa; }
.tree a { position: relative; color: inherit; text-decoration: none; display: block; white-space: nowrap; }
.tree li::before { content: ""; position: absolute; left: 9px; top: 0; height: 20px; border-left: 1px dotted #888; }
.tree li:first-child::before { top: 10px; height: 10px; }
.tree .last:not(.sub)::before { height: 10px; }
.tree .void::before { display: none; }
.tree a::before { content: ""; position: absolute; left: -12px; top: 9px; width: 9px; border-top: 1px dotted #888; }
.tree .sub { padding-left: 38px; }
.tree .sub::after { content: ""; position: absolute; left: 28px; top: 0; height: 20px; border-left: 1px dotted #888; }
.tree .sub.last::after { height: 10px; }
.tree .sub a { padding-left: 2px; }
.tree .sub a::before { left: -10px; }
.tree .sel a { background: #8cc2d0; }
.tree .open::after { content: ""; position: absolute; left: 5px; top: 5px; width: 9px; height: 9px; border: 1px solid #bbb; background: linear-gradient(#222, #222) center / 5px 1px no-repeat #fff; }
.pane { flex: 1; min-width: 0; display: flex; flex-direction: column; gap: 3px; padding-right: 2px; border: 1px solid #d8d8d8; }
.card { padding: 0 9px; background: #fff; border-bottom: 1px solid #c8c8c8; }
.overlap { height: 59px; }
.region { padding-bottom: 6px; }
h2 { display: flex; align-items: center; gap: 7px; height: 24px; font-size: 14px; line-height: 20px; font-weight: 400; color: #00648c; }
.card h2 { margin-left: -2px; }
h3 { display: flex; align-items: center; gap: 5px; height: 18px; font-size: 12px; line-height: 16px; font-weight: 700; color: #00648c; }
.field { display: flex; align-items: flex-start; gap: 2px; height: 22px; }
.field label { flex: 1; line-height: 20px; }
.overlap .field, .region h2 + .field { margin-top: 6px; }
.num { width: 58px; height: 18px; padding: 0 3px; border: 1px solid #707070; background: #fff; font: 10px/14px "Liberation Mono", monospace; }
.overlap .num { padding-left: 8px; }
.unit { width: 50px; padding-left: 3px; padding-right: 12px; font-family: "Liberation Mono", "Noto Sans CJK SC", monospace; font-size: 10px; }
.wide { width: 108px; }
.pick { padding: 0 8px 8px; border: 1px solid #d8d8d8; background: #f0f0f0; margin-bottom: 2px; }
.pick > h3 { margin-left: -4px; }
.point { display: flex; align-items: center; margin-top: 6px; gap: 2px; }
.spec { display: flex; align-items: center; gap: 6px; flex: 1; height: 32px; background: #ffe07a; }
.sq { display: flex; align-items: center; justify-content: center; width: 24px; height: 24px; border: 1px solid #707070; background: #f6f6f6; }
.infer { display: flex; width: 48px; height: 32px; background: #ffe07a; align-items: center; }
.infer span { display: flex; align-items: center; padding-left: 5px; height: 30px; border-left: 1px solid #fff; }
.add { display: flex; justify-content: space-between; align-items: center; height: 28px; }
.add button { display: flex; align-items: center; justify-content: center; width: 24px; height: 24px; background: #74b2c6; }
.list { padding: 0 8px 8px; border: 1px solid #c8c8c8; background: #fff; }
.list h3 { margin-left: -4px; }
.listrow { display: flex; align-items: flex-start; gap: 2px; margin-top: 6px; }
.grid { flex: 1; padding: 1px 2px 1px 1px; border: 1px solid #d8d8d8; }
.grid table { width: 100%; border-collapse: collapse; table-layout: fixed; font: 10px/14px "Liberation Mono", monospace; }
.grid td { width: 68px; height: 20px; padding: 0 3px; text-align: right; border-right: 1px solid #e4e4e4; border-bottom: 1px solid #e4e4e4; }
.grid td:last-child { width: auto; }
.grid tr:nth-child(even) { background: #fafafa; }
.grid .sel { background: #8cc2d0; }
.grid .half td { height: 11px; border-bottom: 0; }
.tools { display: flex; flex-direction: column; gap: 2px; }
.tools .sq { background: #fff; }
.tools .dim { border-color: #b8b8b8; }
.card:last-child { margin-bottom: 4px; }
.actions { margin: 2px 9px 0; padding: 0 9px 8px 6px; height: 71px; background: #fff; border-bottom: 1px solid #c8c8c8; }
.btns { display: flex; gap: 2px; margin: 6px 0 0 210px; }
.act { display: flex; align-items: center; justify-content: center; width: 32px; height: 32px; border: 1px solid #707070; background: #fff; }
.act.end { margin-left: auto; }
.fold { display: flex; justify-content: center; align-items: center; height: 21px; margin: 0 5px; padding-top: 7px; border-bottom: 1px solid #d0d0d0; }
.confirm { display: flex; justify-content: flex-end; gap: 5px; padding: 8px 15px 10px; }
.confirm button { width: 54px; height: 20px; border: 1px solid #00648c; color: #00648c; line-height: 16px; }
.mark { position: absolute; right: 5px; bottom: -5px; display: flex; gap: 6px; width: 264px; pointer-events: none; color: rgba(255, 255, 255, .4); }
.mark div { display: flex; flex-direction: column; padding-top: 8px; }
.mark b { font-size: 42px; line-height: 44px; white-space: nowrap; }
.mark span { font: bold 18px/18px "DejaVu Sans", sans-serif; white-space: nowrap; }
```
